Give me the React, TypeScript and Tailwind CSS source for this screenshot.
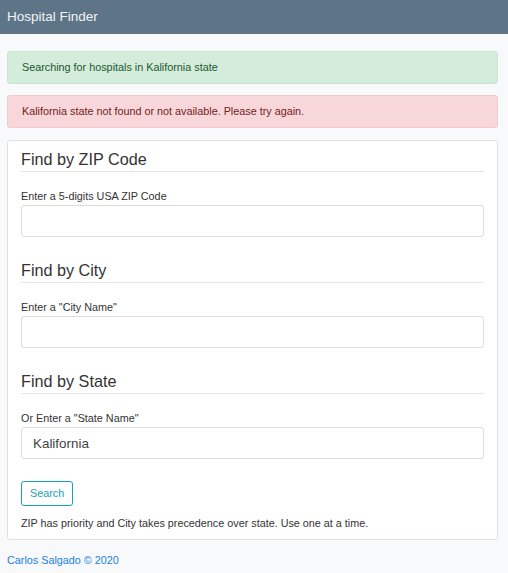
export default function App() {
  const sections = [
    { title: "Find by ZIP Code", label: "Enter a 5-digits USA ZIP Code", value: "" },
    { title: "Find by City", label: 'Enter a "City Name"', value: "" },
    { title: "Find by State", label: 'Or Enter a "State Name"', value: "Kalifornia" },
  ];

  return (
    <div className="min-h-[573px] bg-[#f8f9fa] font-['Liberation_Sans',Arial,sans-serif] text-[#333]">
      <header className="flex h-[34px] items-center bg-[#5e7588] px-[7px]">
        <span className="text-[13.5px] text-[#f1f3f5]">Hospital Finder</span>
      </header>

      <main className="pl-[7px] pr-[10px] pt-[17px]">
        <div className="flex h-[33px] items-center rounded-[3px] border border-[#c9e6cf] bg-[#d4edda] px-[14px] text-[10.8px] text-[#21572f]">
          Searching for hospitals in Kalifornia state
        </div>
        <div className="mt-[11px] flex h-[33px] items-center rounded-[3px] border border-[#f3c9ce] bg-[#f8d7da] px-[14px] text-[10.8px] text-[#721c24]">
          Kalifornia state not found or not available. Please try again.
        </div>

        <div className="mt-[12px] rounded-[3px] border border-[#e0e0e0] bg-white px-[13px] pb-[8px] pt-[7px]">
          {sections.map((s, i) => (
            <section key={s.title} className={i > 0 ? "mt-[22px]" : ""}>
              <h2 className="border-b border-[#e6e6e6] pb-[1px] text-[16.2px] leading-[22px] text-[#333]">
                {s.title}
              </h2>
              <label className="mt-[16px] block text-[10.8px] leading-[16px] text-[#333]">{s.label}</label>
              <input
                readOnly
                value={s.value}
                className="mt-[1px] block h-[32px] w-full rounded-[3px] border border-[#dcdcdc] bg-white px-[11px] text-[13.4px] text-[#444] outline-none"
              />
            </section>
          ))}

          <button className="mt-[22px] h-[25px] rounded-[3px] border border-[#17a2b8] px-[8px] text-[10.8px] text-[#17a2b8]">
            Search
          </button>
          <p className="mt-[9px] text-[10.8px] leading-[16px] text-[#333]">
            ZIP has priority and City takes precedence over state. Use one at a time.
          </p>
        </div>

        <footer className="mt-[12px] text-[10.8px] leading-[16px] text-[#1a7fe6]">Carlos Salgado © 2020</footer>
      </main>
    </div>
  );
}
